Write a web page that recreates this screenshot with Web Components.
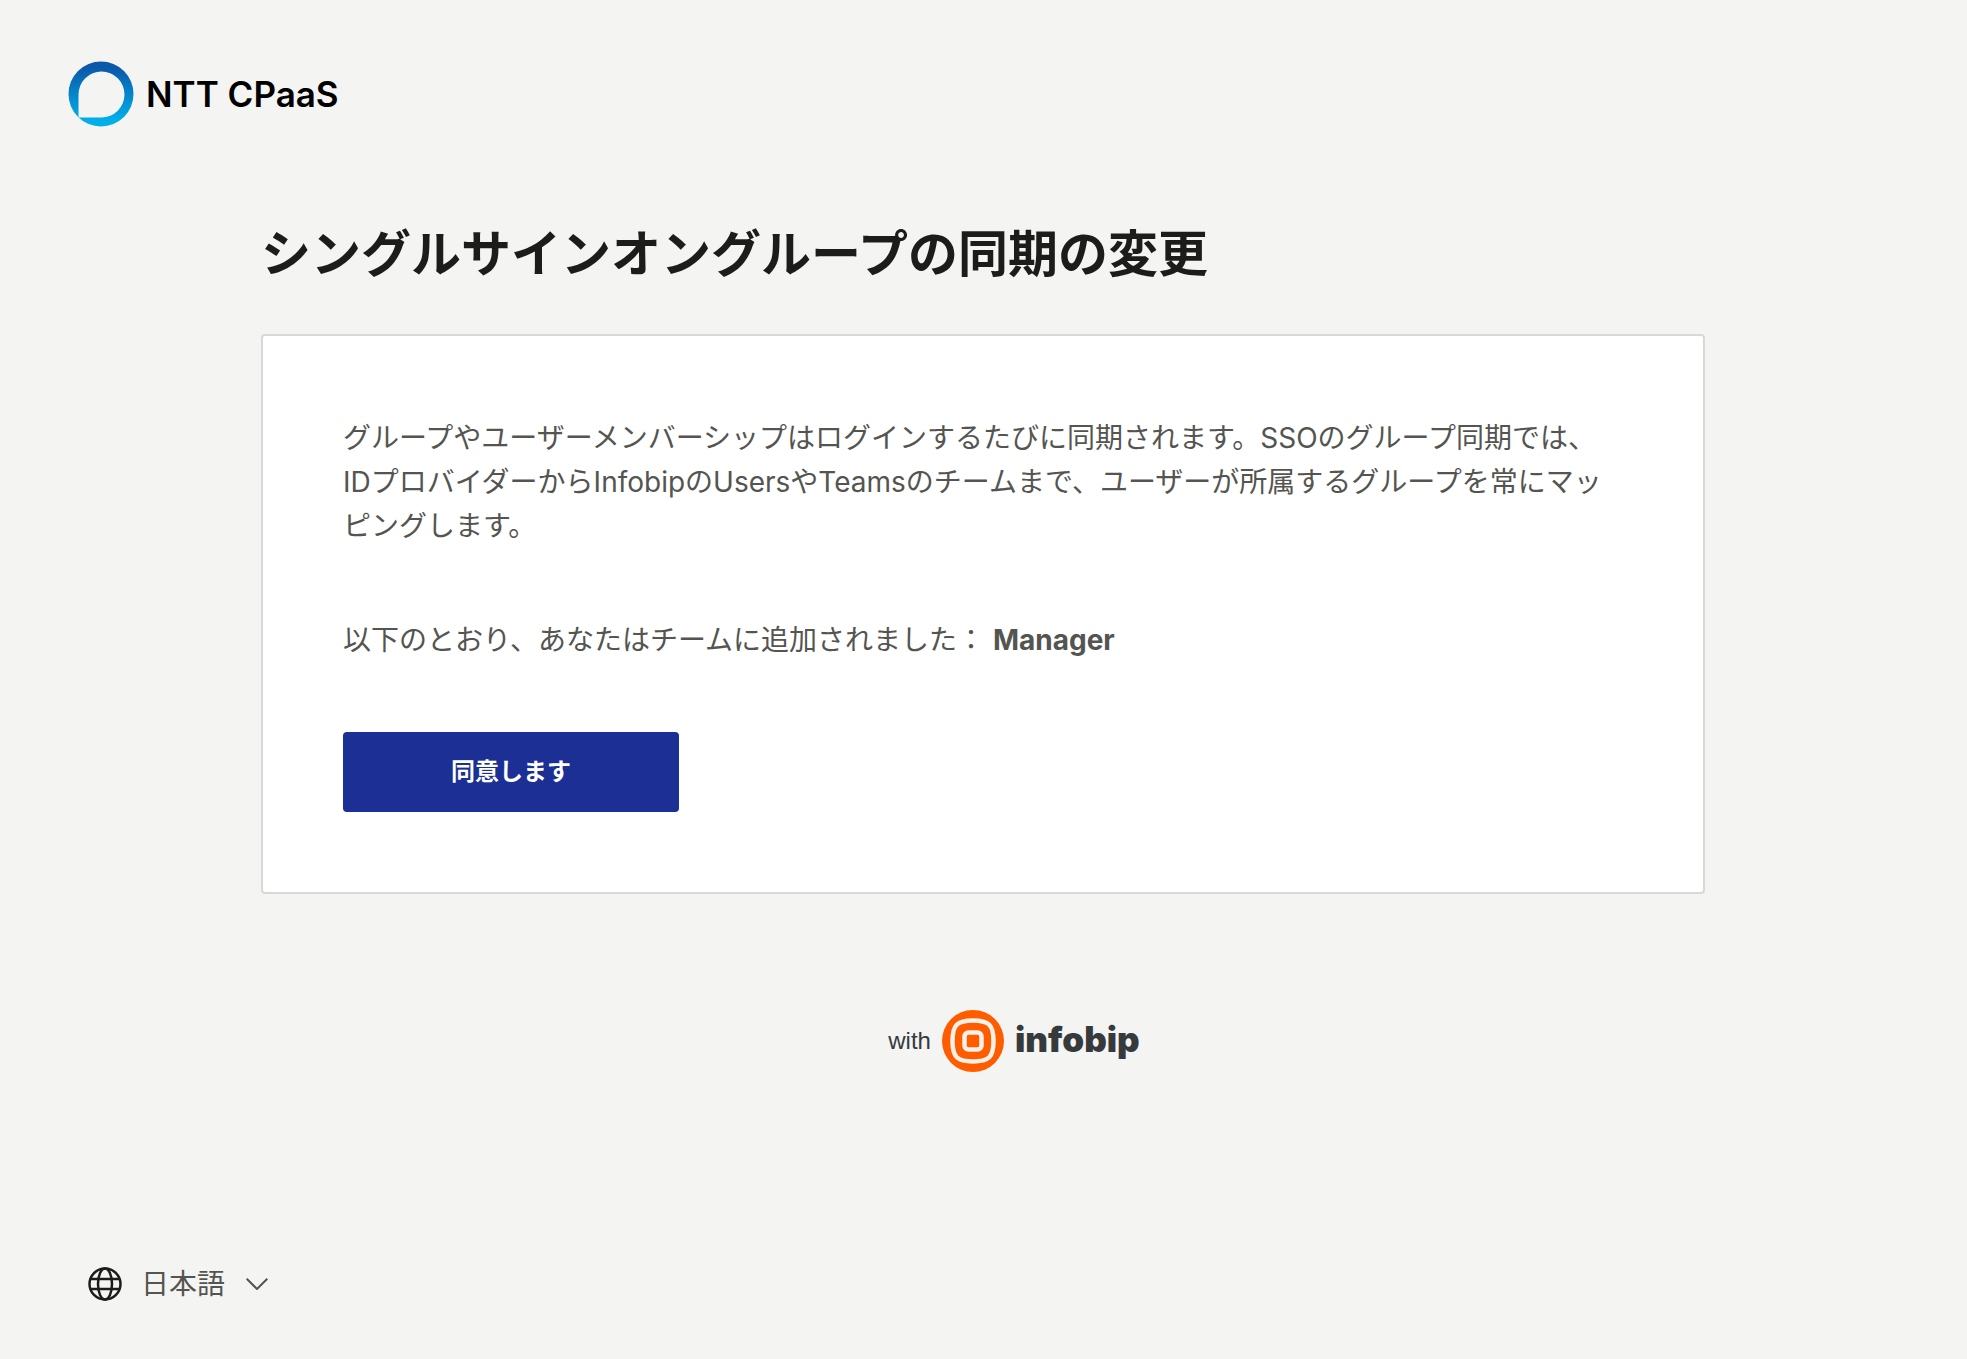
<!DOCTYPE html>
<html lang="ja">
<head>
<meta charset="utf-8">
<meta name="viewport" content="width=device-width, initial-scale=1">
<title>シングルサインオングループの同期の変更</title>
<style>
  html, body { margin: 0; }
  body {
    background: #f4f4f2;
    color: #545450;
    font: 28px/44px Inter, "Noto Sans CJK JP", sans-serif;
  }
</style>
</head>
<body>
<sso-page>
  <ntt-logo slot="header"></ntt-logo>
  <span slot="title">シングルサインオングループの同期の変更</span>
  <consent-card>
    <p>グループやユーザーメンバーシップはログインするたびに同期されます。SSOのグループ同期では、IDプロバイダーからInfobipのUsersやTeamsのチームまで、ユーザーが所属するグループを常にマッピングします。</p>
    <p>以下のとおり、あなたはチームに追加されました： <b>Manager</b></p>
    <primary-button slot="action">同意します</primary-button>
  </consent-card>
  <infobip-credit slot="credit"></infobip-credit>
  <language-picker slot="footer"></language-picker>
</sso-page>
<script>
  const define = (name, html) => customElements.define(name, class extends HTMLElement {
    constructor() {
      super();
      this.attachShadow({ mode: 'open' }).innerHTML = html;
    }
  });

  define('sso-page', `
    <style>
      :host { display: flex; flex-direction: column; box-sizing: border-box; min-height: 100vh; padding: 61px 69px 53px 68px; }
      header { display: flex; }
      main { box-sizing: border-box; width: 100%; max-width: 1444px; margin: 93px auto 0; }
      h1 { margin: 0 0 46px; color: #1c1c1a; font-size: 50px; line-height: 68px; font-weight: 700; }
      .credit { display: flex; justify-content: center; margin-top: 116px; padding-left: 62px; }
      footer { display: flex; margin-top: auto; padding-left: 20px; }
    </style>
    <header><slot name="header"></slot></header>
    <main><h1><slot name="title"></slot></h1><slot></slot></main>
    <div class="credit"><slot name="credit"></slot></div>
    <footer><slot name="footer"></slot></footer>`);

  define('ntt-logo', `
    <style>
      :host { display: flex; align-items: center; gap: 12px; color: #000; font: 600 35px/66px Inter, sans-serif; }
      svg { display: block; width: 66px; height: 66px; }
    </style>
    <svg viewBox="0 0 66 66" aria-hidden="true">
      <defs><linearGradient id="g" x1="0" y1="0" x2="0" y2="1"><stop offset=".08" stop-color="#0b57a8"/><stop offset=".9" stop-color="#00afe9"/></linearGradient></defs>
      <circle cx="33" cy="33" r="32.500" fill="url(#g)"/>
      <path d="M33.500 10.500a23 23 0 0 1 0 46H10.500V33.500a23 23 0 0 1 23-23z" fill="#f4f4f2"/>
    </svg>
    <span>NTT CPaaS</span>`);

  define('consent-card', `
    <style>
      :host { display: flex; flex-direction: column; gap: 70px; padding: 80px; background: #fff; border: 2px solid #d8d8d6; border-radius: 4px; }
      ::slotted(p) { margin: 0; }
      .action { display: flex; }
    </style>
    <slot></slot>
    <div class="action"><slot name="action"></slot></div>`);

  define('primary-button', `
    <style>
      :host { display: block; }
      button { width: 336px; height: 80px; padding: 0; border: 0; border-radius: 4px; background: #1b2f94; color: #fff; font: inherit; font-size: 24px; font-weight: 700; cursor: pointer; }
    </style>
    <button type="button"><slot></slot></button>`);

  define('infobip-credit', `
    <style>
      :host { display: flex; align-items: center; gap: 11px; color: #363a3d; font: 24px/62px "Liberation Sans", Arial, sans-serif; }
      svg { display: block; width: 62px; height: 62px; }
      b { padding-bottom: 4px; font: 900 35px/58px Inter, sans-serif; }
    </style>
    <span>with</span>
    <svg viewBox="0 0 62 62" aria-hidden="true">
      <circle cx="31" cy="31" r="31" fill="#ff5c00"/>
      <path d="M31 10.500C47 10.500 51.500 15 51.500 31S47 51.500 31 51.500 10.500 47 10.500 31 15 10.500 31 10.500z" fill="none" stroke="#fff1e8" stroke-width="4.500"/>
      <rect x="22.500" y="22.500" width="17" height="17" rx="4" fill="none" stroke="#fff1e8" stroke-width="4.500"/>
    </svg>
    <b>infobip</b>`);

  define('language-picker', `
    <style>
      :host { display: flex; align-items: center; gap: 19px; }
      label { display: flex; }
      svg { display: block; fill: none; }
      .field { display: grid; align-items: center; }
      select { grid-area: 1 / 1; appearance: none; margin: 0; padding: 0 42px 0 0; border: 0; background: none; color: inherit; font: inherit; cursor: pointer; }
      .chevron { grid-area: 1 / 1; justify-self: end; pointer-events: none; }
    </style>
    <label for="language" aria-label="言語">
      <svg width="34" height="34" viewBox="0 0 34 34" stroke="#1c1c1a" stroke-width="2.500" aria-hidden="true">
        <circle cx="17" cy="17" r="15.500"/><ellipse cx="17" cy="17" rx="7" ry="15.500"/><path d="M2.500 12h29M2.500 22h29"/>
      </svg>
    </label>
    <div class="field">
      <select id="language"><option>日本語</option></select>
      <svg class="chevron" width="22" height="12" viewBox="0 0 22 12" stroke="#545450" stroke-width="2" aria-hidden="true"><path d="M.7.7 11 11 21.300.7"/></svg>
    </div>`);
</script>
</body>
</html>
